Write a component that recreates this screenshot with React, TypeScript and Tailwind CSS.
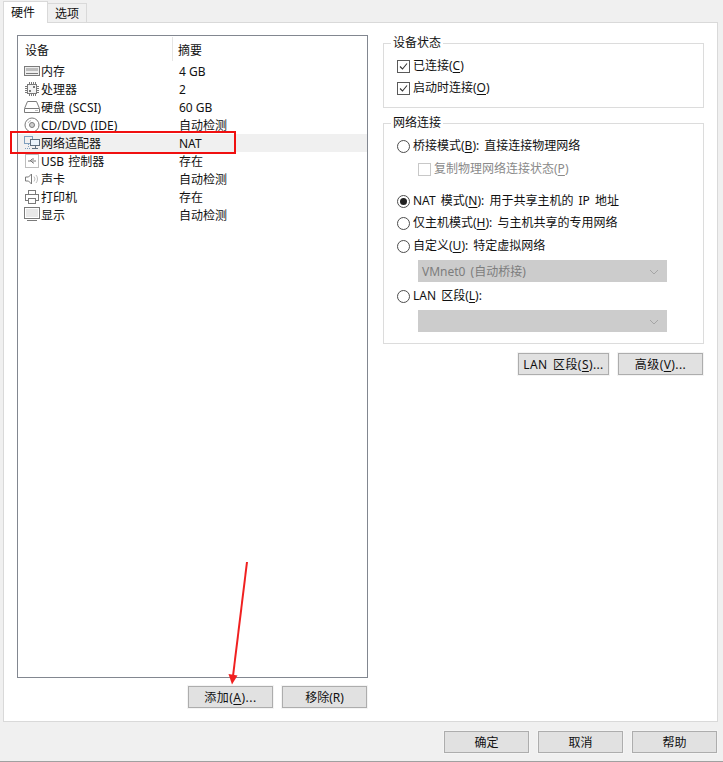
import type { ReactNode } from 'react';

const devices = [
  { name: '内存', summary: '4 GB', icon: 'memory' },
  { name: '处理器', summary: '2', icon: 'cpu' },
  { name: '硬盘 (SCSI)', summary: '60 GB', icon: 'disk' },
  { name: 'CD/DVD (IDE)', summary: '自动检测', icon: 'cd' },
  { name: '网络适配器', summary: 'NAT', icon: 'net', selected: true },
  { name: 'USB 控制器', summary: '存在', icon: 'usb' },
  { name: '声卡', summary: '自动检测', icon: 'sound' },
  { name: '打印机', summary: '存在', icon: 'printer' },
  { name: '显示', summary: '自动检测', icon: 'display' },
];

function DeviceIcon({ type }: { type: string }) {
  const g = '#7a7a7a';
  const l = '#bdbdbd';
  return (
    <svg width="16" height="16" viewBox="0 0 16 16" fill="none" className="shrink-0" shapeRendering="crispEdges">
      {type === 'memory' && (
        <>
          <rect x="0.5" y="3.5" width="15" height="9" stroke={g} fill="#eeeeee" />
          <rect x="2" y="5" width="12" height="3" fill={l} />
          <path d="M2 10.5h12" stroke={g} />
        </>
      )}
      {type === 'cpu' && (
        <>
          <rect x="3.5" y="3.5" width="9" height="9" stroke={g} fill="#f4f4f4" />
          <path d="M5 1v2M7 1v2M9 1v2M11 1v2M5 13v2M7 13v2M9 13v2M11 13v2M1 5h2M1 7h2M1 9h2M1 11h2M13 5h2M13 7h2M13 9h2M13 11h2" stroke={g} />
          <rect x="9" y="5" width="2" height="2" fill={g} />
          <rect x="5" y="9" width="2" height="2" fill={g} />
        </>
      )}
      {type === 'disk' && (
        <>
          <path d="M3.5 2.5h9l3 7v4h-15v-4z" stroke={g} shapeRendering="auto" />
          <path d="M1 9.5h14" stroke={g} />
          <path d="M11 11.5h3" stroke={l} />
        </>
      )}
      {type === 'cd' && (
        <>
          <circle cx="8" cy="8" r="7" stroke={g} shapeRendering="auto" />
          <circle cx="8" cy="8" r="2.5" stroke={g} fill="#cfcfcf" shapeRendering="auto" />
          <path d="M4 6a4.5 4.5 0 0 1 3-2.5" stroke={l} shapeRendering="auto" />
        </>
      )}
      {type === 'net' && (
        <>
          <rect x="0.5" y="1.5" width="8" height="7" stroke="#7f9fbd" />
          <path d="M4 9v4M1 13.5h6" stroke="#7f9fbd" strokeDasharray="1 1" />
          <rect x="6.5" y="4.5" width="9" height="6" stroke="#5f6f7f" fill="#eaf3fb" />
          <path d="M11 11v2M8 13.5h6" stroke="#5f6f7f" />
        </>
      )}
      {type === 'usb' && (
        <>
          <rect x="1.5" y="1.5" width="13" height="13" rx="1" stroke={l} />
          <path d="M4 8h8M6 8l2-2h2M7 8l2 2h1" stroke={g} shapeRendering="auto" />
        </>
      )}
      {type === 'sound' && (
        <>
          <path d="M1.5 6h3l3-3v10l-3-3h-3z" stroke={g} shapeRendering="auto" />
          <path d="M10 5.5a4 4 0 0 1 0 5M12 4a6 6 0 0 1 0 8" stroke={l} shapeRendering="auto" />
        </>
      )}
      {type === 'printer' && (
        <>
          <path d="M4.5 5.5v-4h7v4" stroke={g} />
          <rect x="1.5" y="5.5" width="13" height="6" stroke={g} />
          <rect x="4.5" y="9.5" width="7" height="5" stroke={g} fill="#fff" />
        </>
      )}
      {type === 'display' && (
        <>
          <rect x="0.5" y="0.5" width="15" height="11" stroke={g} />
          <rect x="2" y="2" width="12" height="8" fill="#e8e8e8" />
          <path d="M3 13.5h10" stroke={g} />
        </>
      )}
    </svg>
  );
}

function Key({ children }: { children: ReactNode }) {
  return <span className="underline underline-offset-2">{children}</span>;
}

function Check({ disabled }: { disabled?: boolean }) {
  return (
    <span className={`w-[13px] h-[13px] border shrink-0 flex items-center justify-center bg-white ${disabled ? 'border-[#c8c8c8]' : 'border-[#5a5a5a]'}`}>
      {!disabled && (
        <svg width="11" height="11" viewBox="0 0 11 11" fill="none">
          <path d="M2 5.5l2.5 2.5L9 2.5" stroke="#333" strokeWidth="1.1" />
        </svg>
      )}
    </span>
  );
}

function Radio({ checked }: { checked?: boolean }) {
  return (
    <span className="w-[13px] h-[13px] rounded-full border border-[#4d4d4d] shrink-0 flex items-center justify-center bg-white">
      {checked && <span className="w-[7px] h-[7px] rounded-full bg-[#222]" />}
    </span>
  );
}

function DisabledSelect({ label, className }: { label?: string; className: string }) {
  return (
    <div className={`ml-[21px] w-[249px] h-[22px] pt-[1px] bg-[#cccccc] flex items-center justify-between pl-1 pr-2 text-[#7d7d7d] ${className}`}>
      <span>{label}</span>
      <svg width="10" height="6" viewBox="0 0 10 6" fill="none">
        <path d="M1 1l4 4 4-4" stroke="#a6a6a6" />
      </svg>
    </div>
  );
}

function Btn({ children, className }: { children: ReactNode; className: string }) {
  return (
    <div className={`h-[22px] pt-[2px] border border-[#adadad] bg-[#e1e1e1] outline outline-1 outline-[#f4f4f4] flex items-center justify-center text-[#111] ${className}`}>
      {children}
    </div>
  );
}

export default function App() {
  return (
    <div
      className="relative w-[723px] h-[762px] overflow-hidden bg-[#f0f0f0] border-b border-[#a0a0a0] text-[12px] leading-[16px] text-[#111] flex flex-col"
      style={{ fontFamily: '"Noto Sans", "Noto Sans CJK SC", sans-serif' }}
    >
      {/* tabs */}
      <div className="flex items-end pl-[3px] pt-[2px] h-[23px] relative z-10">
        <div className="w-[45px] h-[22px] pt-[1px] pl-[7px] bg-white border border-b-0 border-[#d9d9d9] flex items-center">硬件</div>
        <div className="w-[39px] h-[19px] pt-[2px] mb-[1px] bg-[#f0f0f0] border border-l-0 border-b-0 border-[#d9d9d9] flex items-center justify-center">选项</div>
      </div>

      {/* main panel */}
      <div className="ml-[3px] mt-[-1px] w-[715px] h-[700px] bg-white border border-[#d9d9d9] flex pl-[13px] pt-[12px]">
        <div className="w-[351px] flex flex-col">
          <div className="h-[643px] border border-[#828790] pt-[1px]">
            <div className="flex h-[24px]">
              <div className="w-[155px] pl-[7px] border-r border-[#e5e5e5] pt-[6px]">设备</div>
              <div className="pl-[5px] pt-[6px]">摘要</div>
            </div>
            <div className="mt-[1px]">
              {devices.map((d) => (
                <div key={d.name} className={`flex h-[18px] items-center ${d.selected ? 'bg-[#f0f0f0]' : ''}`}>
                  <div className="w-[156px] flex items-center pl-[6px] gap-[1px]">
                    <DeviceIcon type={d.icon} />
                    <span className="whitespace-nowrap pt-[2px] [word-spacing:1px]">{d.name}</span>
                  </div>
                  <span className="pl-[5px] pt-[2px]">{d.summary}</span>
                </div>
              ))}
            </div>
          </div>
          <div className="flex justify-end gap-[9px] mt-[8px] mr-[1px]">
            <Btn className="w-[85px] tracking-[0.5px]">添加(<Key>A</Key>)...</Btn>
            <Btn className="w-[85px]">移除(R)</Btn>
          </div>
        </div>

        <div className="w-[321px] ml-[15px] flex flex-col [word-spacing:2px]">
          <fieldset className="h-[73px] border border-[#dcdcdc] px-[13px]">
            <legend className="-ml-[6px] px-[2px]">设备状态</legend>
            <div className="flex items-center gap-[3px] h-[22px] mt-[4px]">
              <Check />
              <span>已连接(<Key>C</Key>)</span>
            </div>
            <div className="flex items-center gap-[3px] h-[22px]">
              <Check />
              <span>启动时连接(<Key>O</Key>)</span>
            </div>
          </fieldset>

          <fieldset className="h-[229px] mt-[7px] border border-[#dcdcdc] px-[13px]">
            <legend className="-ml-[6px] px-[2px]">网络连接</legend>
            <div className="flex items-center gap-[3px] h-[22px] mt-[4px]">
              <Radio />
              <span>桥接模式(<Key>B</Key>): 直接连接物理网络</span>
            </div>
            <div className="flex items-center gap-[3px] h-[22px] ml-[21px] mt-[1px] text-[#8a8a8a]">
              <Check disabled />
              <span>复制物理网络连接状态(<Key>P</Key>)</span>
            </div>
            <div className="flex items-center gap-[3px] h-[22px] mt-[10px]">
              <Radio checked />
              <span>NAT 模式(<Key>N</Key>): 用于共享主机的 IP 地址</span>
            </div>
            <div className="flex items-center gap-[3px] h-[22px]">
              <Radio />
              <span>仅主机模式(<Key>H</Key>): 与主机共享的专用网络</span>
            </div>
            <div className="flex items-center gap-[3px] h-[22px] mt-[1px]">
              <Radio />
              <span>自定义(<Key>U</Key>): 特定虚拟网络</span>
            </div>
            <DisabledSelect label="VMnet0 (自动桥接)" className="mt-[3px]" />
            <div className="flex items-center gap-[3px] h-[22px] mt-[3px]">
              <Radio />
              <span>LAN 区段(<Key>L</Key>):</span>
            </div>
            <DisabledSelect className="mt-[3px]" />
          </fieldset>

          <div className="flex justify-end gap-[9px] mt-[9px] mr-[1px]">
            <Btn className="w-[91px] tracking-[0.4px]">LAN 区段(<Key>S</Key>)...</Btn>
            <Btn className="w-[85px] tracking-[0.4px]">高级(<Key>V</Key>)...</Btn>
          </div>
        </div>
      </div>

      {/* footer */}
      <div className="flex justify-end gap-[9px] mt-[9px] mr-[6px]">
        <Btn className="w-[85px]">确定</Btn>
        <Btn className="w-[85px]">取消</Btn>
        <Btn className="w-[85px]">帮助</Btn>
      </div>

      {/* annotations */}
      <div className="absolute left-[10px] top-[131px] w-[226px] h-[23px] border-2 border-[#f01010]" />
      <svg className="absolute left-0 top-0 pointer-events-none" width="723" height="762" fill="none">
        <path d="M247 562L233 676" stroke="#f02020" strokeWidth="2" />
        <path d="M228.5 674L237.5 675.5L232 684.5z" fill="#f02020" />
      </svg>
    </div>
  );
}
